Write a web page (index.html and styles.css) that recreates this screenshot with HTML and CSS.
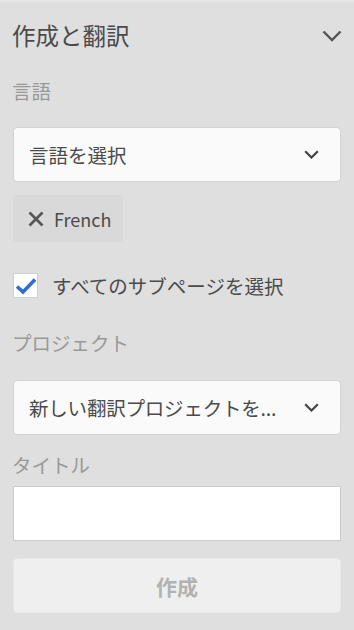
FILE: index.html
```html
<!DOCTYPE html>
<html lang="ja">
<head>
  <meta charset="UTF-8" />
  <meta name="viewport" content="width=device-width, initial-scale=1.0" />
  <title>作成と翻訳</title>
  <link rel="stylesheet" href="styles.css">
</head>
<body>
  <div class="panel">
    <div class="header">
      <h1>作成と翻訳</h1>
      <svg class="chev-big" width="20" height="12" viewBox="0 0 20 12"><path d="M1.5 1.5 L10 10 L18.5 1.5" fill="none" stroke="#555" stroke-width="2.4"/></svg>
    </div>

    <div class="label lang-label">言語</div>
    <div class="select">
      <span>言語を選択</span>
      <svg width="15" height="9" viewBox="0 0 15 9"><path d="M1.2 1.2 L7.5 7.5 L13.8 1.2" fill="none" stroke="#444" stroke-width="2.2"/></svg>
    </div>

    <div class="tag">
      <svg width="16" height="16" viewBox="0 0 16 16"><path d="M1.5 1.5 L14.5 14.5 M14.5 1.5 L1.5 14.5" stroke="#555" stroke-width="2.6"/></svg>
      <span>French</span>
    </div>

    <div class="check-row">
      <span class="checkbox">
        <svg width="22" height="18" viewBox="0 0 22 18"><path d="M2 9.5 L8 15 L20 2.5" fill="none" stroke="#2b6fd6" stroke-width="3.6"/></svg>
      </span>
      <span>すべてのサブページを選択</span>
    </div>

    <div class="label project-label">プロジェクト</div>
    <div class="select select-project">
      <span>新しい翻訳プロジェクトを...</span>
      <svg width="15" height="9" viewBox="0 0 15 9"><path d="M1.2 1.2 L7.5 7.5 L13.8 1.2" fill="none" stroke="#444" stroke-width="2.2"/></svg>
    </div>

    <div class="label title-label">タイトル</div>
    <input type="text" class="title-input" />

    <button class="create" disabled>作成</button>
  </div>
</body>
</html>
```

FILE: styles.css
```css
body {
  margin: 0;
  background: #dfdfdf;
  font-family: "Noto Sans CJK JP", "Noto Sans", sans-serif;
  color: #4b4b4b;
}
.panel {
  border-top: 2px solid #e8e8e8;
  padding: 0 13px;
  display: flex;
  flex-direction: column;
}
.header {
  height: 66px;
  display: flex;
  align-items: center;
  justify-content: space-between;
}
.header h1 {
  margin: 0 0 0 -1px;
  font-size: 23.5px;
  font-weight: normal;
  color: #4b4b4b;
}
.chev-big {
  margin-right: -1px;
  margin-top: 2px;
}
.label {
  height: 30px;
  line-height: 30px;
  font-size: 19.5px;
  color: #999;
  margin-left: -1px;
}
.lang-label {
  margin-top: 8px;
}
.select {
  margin-top: 21px;
  height: 55px;
  box-sizing: border-box;
  background: #fafafa;
  border: 1px solid #d2d2d2;
  border-radius: 4px;
  display: flex;
  align-items: center;
  justify-content: space-between;
  padding: 0 21px 0 15px;
  font-size: 19.5px;
}
.select-project span {
  letter-spacing: -0.2px;
}
.tag {
  margin-top: 13px;
  height: 47px;
  width: 110px;
  box-sizing: border-box;
  background: #d9d9d9;
  border-radius: 3px;
  display: flex;
  align-items: center;
  gap: 10px;
  padding-left: 15px;
  font-size: 18px;
  color: #4b4b4b;
}
.check-row {
  margin-top: 31px;
  height: 25px;
  display: flex;
  align-items: center;
  gap: 14px;
  font-size: 19.5px;
}
.checkbox {
  width: 25px;
  height: 25px;
  box-sizing: border-box;
  background: #fff;
  border: 1px solid #cfcfcf;
  display: flex;
  align-items: center;
  justify-content: center;
}
.project-label {
  margin-top: 30px;
}
.select-project {
  margin-top: 22px;
}
.title-label {
  margin-top: 15px;
}
.title-input {
  margin-top: 6px;
  height: 55px;
  box-sizing: border-box;
  background: #fff;
  border: 1px solid #cbcbcb;
  border-radius: 0;
  outline: none;
}
.create {
  margin-top: 17px;
  height: 55px;
  background: #efefef;
  border: 1px solid #e6e6e6;
  border-radius: 4px;
  font-family: inherit;
  font-size: 21px;
  font-weight: bold;
  color: #b2b2b2;
}
```
